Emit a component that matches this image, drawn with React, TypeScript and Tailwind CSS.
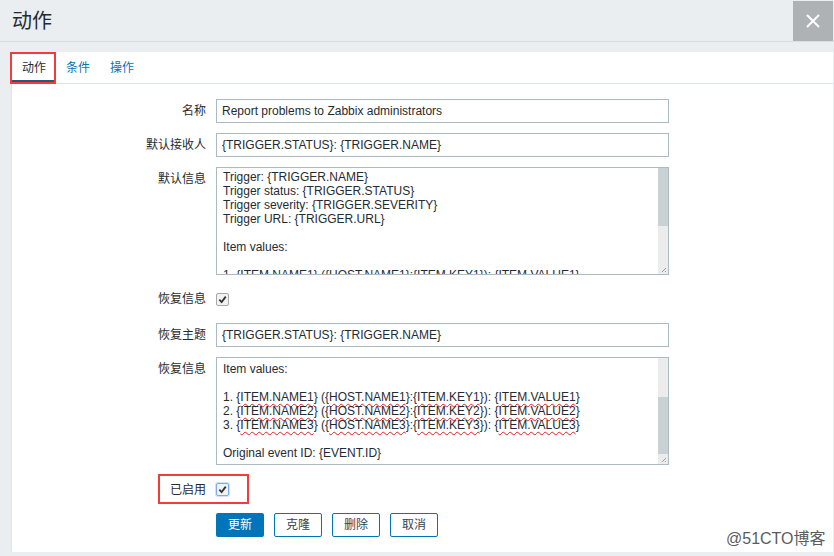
import React from 'react';

type Token = string | { sq: string };

const line1: Token[] = ['1. {', { sq: 'ITEM.NAME1' }, '} ({', { sq: 'HOST.NAME1' }, '}:{', { sq: 'ITEM.KEY1' }, '}): {', { sq: 'ITEM.VALUE1' }, '}'];
const line2: Token[] = ['2. {', { sq: 'ITEM.NAME2' }, '} ({', { sq: 'HOST.NAME2' }, '}:{', { sq: 'ITEM.KEY2' }, '}): {', { sq: 'ITEM.VALUE2' }, '}'];
const line3: Token[] = ['3. {', { sq: 'ITEM.NAME3' }, '} ({', { sq: 'HOST.NAME3' }, '}:{', { sq: 'ITEM.KEY3' }, '}): {', { sq: 'ITEM.VALUE3' }, '}'];

const defaultMessage: Token[][] = [
  ['Trigger: {TRIGGER.NAME}'],
  ['Trigger status: {TRIGGER.STATUS}'],
  ['Trigger severity: {TRIGGER.SEVERITY}'],
  ['Trigger URL: {TRIGGER.URL}'],
  [''],
  ['Item values:'],
  [''],
  ['1. {ITEM.NAME1} ({HOST.NAME1}:{ITEM.KEY1}): {ITEM.VALUE1}'],
];

const recoveryMessage: Token[][] = [
  ['Item values:'],
  [''],
  line1,
  line2,
  line3,
  [''],
  ['Original event ID: {EVENT.ID}'],
];

const Grip = () => (
  <svg viewBox="0 0 10 10" className="w-[10px] h-[10px]">
    <path d="M8 4 L4 8 M8 7 L7 8" stroke="#9a9a9a" strokeWidth="1" fill="none" />
  </svg>
);

const TextLine = ({ tokens }: { tokens: Token[] }) => (
  <div className="h-[14px] leading-[14px] whitespace-pre">
    {tokens.map((t, i) =>
      typeof t === 'string' ? (
        <span key={i}>{t}</span>
      ) : (
        <span key={i} className="underline decoration-wavy decoration-[#e02020] decoration-1 underline-offset-2">
          {t.sq}
        </span>
      )
    )}
  </div>
);

const TextBox = ({ lines, scrolled }: { lines: Token[][]; scrolled?: boolean }) => (
  <div className="w-[453px] h-[108px] border border-[#acbbc2] bg-white flex">
    <div className={`flex-1 overflow-hidden pl-[6px] text-[12px] text-[#1f2c33] ${scrolled ? 'pt-[4px]' : 'pt-[2px]'}`}>
      {lines.map((l, i) => (
        <TextLine key={i} tokens={l} />
      ))}
    </div>
    <div className="w-[10px] bg-[#ececec] flex flex-col">
      {scrolled && <div className="h-[39px]" />}
      <div className="h-[58px] bg-[#c9d1d5]" />
      <div className="flex-1" />
      <Grip />
    </div>
  </div>
);

const Check = ({ focus }: { focus?: boolean }) => (
  <span
    className={`w-[13px] h-[13px] rounded-[2px] border flex items-center justify-center bg-[#f2f2f2] ${
      focus ? 'border-[#79aee6] ring-1 ring-[#cfe2f7]' : 'border-[#a8a8a8]'
    }`}
  >
    <svg viewBox="0 0 10 10" className="w-[9px] h-[9px]">
      <path d="M1.5 5.2 L4 7.8 L8.6 1.8" stroke="#333" strokeWidth="2" fill="none" />
    </svg>
  </span>
);

const Label = ({ children, top }: { children: React.ReactNode; top?: boolean }) => (
  <div className={`w-[204px] shrink-0 pr-[10px] text-right text-[12px] text-[#1f2c33] ${top ? 'pt-[3px]' : ''}`}>
    {children}
  </div>
);

const Input = ({ value }: { value: string }) => (
  <div className="w-[453px] h-[24px] border border-[#acbbc2] bg-white px-[5px] flex items-center text-[12px] text-[#1f2c33] whitespace-nowrap overflow-hidden">
    {value}
  </div>
);

export default function App() {
  return (
    <div className="relative w-[834px] h-[556px] overflow-hidden bg-[#ebeef0] flex flex-col font-['Liberation_Sans','Noto_Sans_CJK_SC',sans-serif]">
      {/* 标题栏 */}
      <div className="h-[42px] shrink-0 border-b border-[#d9dee1] flex items-start justify-between">
        <div className="pl-[12px] pt-[8px] text-[20px] leading-[26px] text-[#1f2c33]">动作</div>
        <button className="mt-px mr-px w-[40px] h-[40px] bg-[#aeb2b5] flex items-center justify-center">
          <svg viewBox="0 0 14 14" className="w-[14px] h-[14px]">
            <path d="M1 1 L13 13 M13 1 L1 13" stroke="#fff" strokeWidth="2" fill="none" />
          </svg>
        </button>
      </div>

      <div className="flex-1 pl-[11px] pr-px pt-[10px] pb-[4px] flex">
        <div className="flex-1 bg-white border-l border-[#dfe4e7] flex flex-col">
          {/* 选项卡 */}
          <div className="relative h-[32px] border-b border-[#dfe4e7] flex text-[12px]">
            <div className="h-[31px] px-[10px] flex items-center text-[#1f2c33] border-b-[3px] border-[#2f5576] pt-[3px]">动作</div>
            <div className="h-[31px] px-[10px] flex items-center text-[#0275b8]">条件</div>
            <div className="h-[31px] px-[10px] flex items-center text-[#0275b8]">操作</div>
            <div className="absolute left-[-2px] top-0 w-[46px] h-[32px] border-2 border-[#f23b3b]" />
          </div>

          {/* 表单 */}
          <div className="pt-[15px] flex flex-col">
            <div className="flex items-center">
              <Label>名称</Label>
              <Input value="Report problems to Zabbix administrators" />
            </div>
            <div className="flex items-center mt-[10px]">
              <Label>默认接收人</Label>
              <Input value="{TRIGGER.STATUS}: {TRIGGER.NAME}" />
            </div>
            <div className="flex items-start mt-[10px]">
              <Label top>默认信息</Label>
              <TextBox lines={defaultMessage} />
            </div>
            <div className="flex items-center mt-[10px] h-[28px]">
              <Label>恢复信息</Label>
              <Check />
            </div>
            <div className="flex items-center mt-[10px]">
              <Label>恢复主题</Label>
              <Input value="{TRIGGER.STATUS}: {TRIGGER.NAME}" />
            </div>
            <div className="flex items-start mt-[10px]">
              <Label top>恢复信息</Label>
              <TextBox lines={recoveryMessage} scrolled />
            </div>
            <div className="relative flex items-center mt-[10px] h-[29px]">
              <Label>已启用</Label>
              <Check focus />
              <div className="absolute left-[146px] top-[-1px] w-[91px] h-[30px] border-2 border-[#f23b3b]" />
            </div>
            <div className="flex mt-[9px] pl-[204px] gap-[10px] text-[12px]">
              <button className="w-[48px] h-[24px] rounded-[2px] bg-[#0275b8] text-white">更新</button>
              <button className="w-[48px] h-[24px] rounded-[2px] border border-[#0275b8] bg-white text-[#35444f]">克隆</button>
              <button className="w-[48px] h-[24px] rounded-[2px] border border-[#0275b8] bg-white text-[#35444f]">删除</button>
              <button className="w-[48px] h-[24px] rounded-[2px] border border-[#0275b8] bg-white text-[#35444f]">取消</button>
            </div>
          </div>
        </div>
      </div>

      {/* 水印 */}
      <div className="absolute left-[726px] top-[527px] text-[16px] text-[#5c5c5c]">@51CTO博客</div>
    </div>
  );
}
